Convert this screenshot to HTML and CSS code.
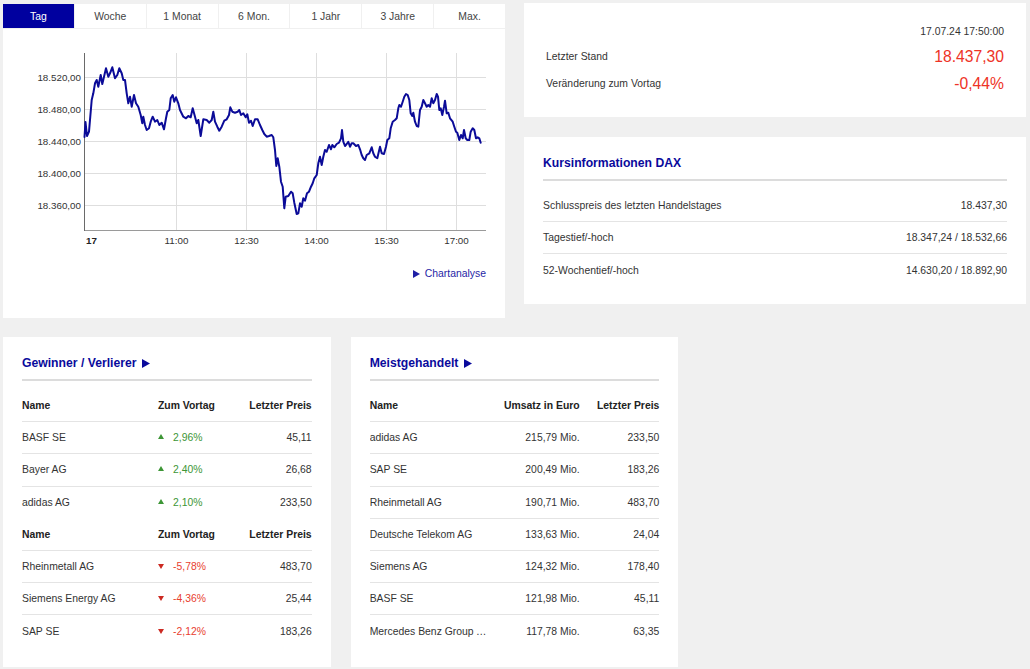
FILE: index.html
```html
<!DOCTYPE html>
<html lang="de">
<head>
<meta charset="utf-8">
<title>DAX</title>
<link rel="stylesheet" href="styles.css">
</head>
<body>
<div class="top">
  <section class="chart-panel">
    <nav class="tabs">
      <span class="tab active">Tag</span>
      <span class="tab">Woche</span>
      <span class="tab">1 Monat</span>
      <span class="tab">6 Mon.</span>
      <span class="tab">1 Jahr</span>
      <span class="tab">3 Jahre</span>
      <span class="tab">Max.</span>
    </nav>
    <svg class="chart" width="502" height="223" viewBox="3 29 502 223">
      <g class="grid">
        <line x1="84" y1="77.5" x2="486" y2="77.5"/>
        <line x1="84" y1="109.5" x2="486" y2="109.5"/>
        <line x1="84" y1="141.5" x2="486" y2="141.5"/>
        <line x1="84" y1="173.5" x2="486" y2="173.5"/>
        <line x1="84" y1="205.5" x2="486" y2="205.5"/>
        <line x1="176.5" y1="53" x2="176.5" y2="230"/>
        <line x1="246.5" y1="53" x2="246.5" y2="230"/>
        <line x1="316.5" y1="53" x2="316.5" y2="230"/>
        <line x1="386.5" y1="53" x2="386.5" y2="230"/>
        <line x1="456.5" y1="53" x2="456.5" y2="230"/>
      </g>
      <line class="axis-x" x1="84" y1="230.5" x2="486" y2="230.5"/>
      <line class="axis-y" x1="84.5" y1="53" x2="84.5" y2="231"/>
      <g class="ylabels">
        <text x="81" y="81.1">18.520,00</text>
        <text x="81" y="113.1">18.480,00</text>
        <text x="81" y="145.1">18.440,00</text>
        <text x="81" y="177.1">18.400,00</text>
        <text x="81" y="209.1">18.360,00</text>
      </g>
      <g class="xlabels">
        <text x="86" y="244.3" class="day">17</text>
        <text x="176.5" y="244.3" text-anchor="middle">11:00</text>
        <text x="246.5" y="244.3" text-anchor="middle">12:30</text>
        <text x="316.5" y="244.3" text-anchor="middle">14:00</text>
        <text x="386.5" y="244.3" text-anchor="middle">15:30</text>
        <text x="456.5" y="244.3" text-anchor="middle">17:00</text>
      </g>
      <polyline class="line" points="84.5,137 85.5,122 87,136 89,131.7 91.7,100 93.3,93.3 95,83.3 96.7,80 98.3,86.7 100.7,75 102.3,84 104,76.7 106,68.3 108.3,76.7 110,73.3 112.3,67.3 115,78.3 117.3,75 119.3,68.3 121.7,73.3 123.3,80 125,80 126.7,93.3 128.3,103.3 130,96.7 131.7,106.7 134,95 136,103.3 138.3,106.7 140.7,115 142.3,123.3 143.3,116.7 145,125 146.7,130 149,128.3 150.7,121.7 152.7,116.7 155,121.7 157.3,120 159.3,125 161.7,122.7 164,129.3 166,118.3 167.3,111.7 169.3,110 170.7,98.3 172.7,95 174.3,101.7 176,97.3 178.3,103.3 180,110 183.3,116.7 186,118.3 188.3,116 190.7,117.3 192.7,108.3 195,116.7 196.7,123.3 198.3,120 200.7,136 203.3,119.3 206.7,120 209.3,122.7 211.7,120 213.3,111.7 215,121.7 217.3,126.7 219.3,130.7 221.7,126.7 224.3,120.7 226.7,119.3 229,115 230.3,107.3 232.3,111.7 235,112.7 237.7,111.7 239.3,110 241,115 243.3,113.3 245.7,117.3 247.3,114.3 249,122.7 251,120.7 252.7,126 255,119.3 257.7,119.3 260,125 262.3,130 264.3,134 266.7,136.7 269,136 271.7,135 273.3,137.3 275,150 276.3,166 277.7,158.3 279.3,166.7 281,181.7 282.7,186.7 284.3,208.3 285.7,196.7 288.3,196 291,191.7 292.7,193.3 294.3,202.7 296.7,214 298.3,213.3 300,203.3 301.7,206.7 303.3,198.3 305,200.7 307,193.3 309,191.7 311,186.7 312.7,183.3 314.3,178.3 316.7,175 318.3,163.3 320,156.7 321.7,165 323.3,156.7 325,150 326.7,151.7 329,145 331,149.3 332.3,145 334.3,147.3 336.7,144 339,142.7 341,138.3 342,130 343.3,141.7 345,146 346.7,144 348.3,141.7 350,146.7 351.7,143.3 353.3,143.3 356,146 358.3,145 360,149.3 361.7,155 363.3,158.3 365,160 366.7,155 369.3,153.3 371.7,147.3 373.3,153.3 375,156.7 377.3,158.3 380,146.7 381.7,153.3 384,154 386,146.7 387.3,140 389.3,138.3 390.7,128.3 392.7,121.7 395,120 396.7,118.3 398.3,108.3 399.3,105 401,106.7 402.7,101.7 404.3,96.7 406,94 407.7,95 409.3,100 410.7,113.3 412.3,116 413.3,112.7 415,121.7 416.7,126 418.3,126.7 420,110 421.7,106.7 423.3,100 425,103.3 426.7,106.7 428.3,105 430,106.7 431.7,98.3 433.3,103.3 435,100 436.7,94 438,96.7 439.3,110 440.7,108.3 442.3,115 444,106.7 445,100.7 446.7,113.3 448.3,112.7 450,118.3 452.7,121.7 454.3,126.7 456,131.7 457.3,132.7 459.3,140 461,135 462.7,138.3 464,130 465.7,138.3 467.3,140 469.3,140 470.7,131.7 472.7,128.3 474.3,130 476,138.3 477.7,137.3 479.3,138.3 480.7,142.7"/>
    </svg>
    <a class="chart-link" href="#"><svg width="7" height="8" viewBox="0 0 7 8"><polygon points="0,0 7,4 0,8"/></svg>Chartanalyse</a>
  </section>

  <div class="side">
    <section class="quote">
      <div class="ts">17.07.24 17:50:00</div>
      <div class="qrow"><span>Letzter Stand</span><span class="big">18.437,30</span></div>
      <div class="qrow second"><span>Veränderung zum Vortag</span><span class="big">-0,44%</span></div>
    </section>
    <section class="card kurs">
      <h2 class="card-title">Kursinformationen DAX</h2>
      <div class="rows">
        <div class="row r2"><span>Schlusspreis des letzten Handelstages</span><span class="num">18.437,30</span></div>
        <div class="row r2"><span>Tagestief/-hoch</span><span class="num">18.347,24 / 18.532,66</span></div>
        <div class="row r2 last"><span>52-Wochentief/-hoch</span><span class="num">14.630,20 / 18.892,90</span></div>
      </div>
    </section>
  </div>
</div>

<div class="bottom">
  <section class="card">
    <h2 class="card-title">Gewinner / Verlierer <svg width="8" height="9" viewBox="0 0 8 9"><polygon points="0,0 8,4.5 0,9"/></svg></h2>
    <div class="rows">
      <div class="row gv head"><span>Name</span><span>Zum Vortag</span><span class="num">Letzter Preis</span></div>
      <div class="row gv"><span>BASF SE</span><span class="chg up"><i class="tri"></i>2,96%</span><span class="num">45,11</span></div>
      <div class="row gv"><span>Bayer AG</span><span class="chg up"><i class="tri"></i>2,40%</span><span class="num">26,68</span></div>
      <div class="row gv last"><span>adidas AG</span><span class="chg up"><i class="tri"></i>2,10%</span><span class="num">233,50</span></div>
      <div class="row gv head"><span>Name</span><span>Zum Vortag</span><span class="num">Letzter Preis</span></div>
      <div class="row gv"><span>Rheinmetall AG</span><span class="chg down"><i class="tri"></i>-5,78%</span><span class="num">483,70</span></div>
      <div class="row gv"><span>Siemens Energy AG</span><span class="chg down"><i class="tri"></i>-4,36%</span><span class="num">25,44</span></div>
      <div class="row gv last"><span>SAP SE</span><span class="chg down"><i class="tri"></i>-2,12%</span><span class="num">183,26</span></div>
    </div>
  </section>

  <section class="card">
    <h2 class="card-title">Meistgehandelt <svg width="8" height="9" viewBox="0 0 8 9"><polygon points="0,0 8,4.5 0,9"/></svg></h2>
    <div class="rows">
      <div class="row mg head"><span>Name</span><span class="num">Umsatz in Euro</span><span class="num">Letzter Preis</span></div>
      <div class="row mg"><span class="name">adidas AG</span><span class="num">215,79 Mio.</span><span class="num">233,50</span></div>
      <div class="row mg"><span class="name">SAP SE</span><span class="num">200,49 Mio.</span><span class="num">183,26</span></div>
      <div class="row mg"><span class="name">Rheinmetall AG</span><span class="num">190,71 Mio.</span><span class="num">483,70</span></div>
      <div class="row mg"><span class="name">Deutsche Telekom AG</span><span class="num">133,63 Mio.</span><span class="num">24,04</span></div>
      <div class="row mg"><span class="name">Siemens AG</span><span class="num">124,32 Mio.</span><span class="num">178,40</span></div>
      <div class="row mg"><span class="name">BASF SE</span><span class="num">121,98 Mio.</span><span class="num">45,11</span></div>
      <div class="row mg last"><span class="name">Mercedes Benz Group AG</span><span class="num">117,78 Mio.</span><span class="num">63,35</span></div>
    </div>
  </section>
</div>
</body>
</html>
```
FILE: styles.css
```css
* { box-sizing: border-box; }

body {
  margin: 0;
  padding: 3px 4px 0 3px;
  background: #f0f0f0;
  font-family: "Liberation Sans", Arial, Helvetica, sans-serif;
  font-size: 10.4px;
  color: #333;
}

.top {
  display: grid;
  grid-template-columns: 1fr 1fr;
  gap: 19px;
  margin-bottom: 19px;
}

/* chart panel */
.chart-panel {
  display: flex;
  flex-direction: column;
  background: #fff;
}

.tabs {
  display: grid;
  grid-template-columns: repeat(7, 1fr);
  gap: 1px;
  padding: 1px 0;
  background: #f0f0f0;
}

.tab {
  height: 24px;
  display: flex;
  align-items: center;
  justify-content: center;
  background: #fff;
  color: #444;
}

.tab.active {
  background: #00009f;
  color: #fff;
}

.chart { display: block; }

.chart .grid line { stroke: #dedede; stroke-width: 1; }
.chart .axis-x { stroke: #9a9a9a; stroke-width: 1; }
.chart .axis-y { stroke: #6a6a6a; stroke-width: 1; }
.chart text {
  font-family: "Liberation Sans", Arial, sans-serif;
  font-size: 9.8px;
  fill: #333;
}
.chart .ylabels text { text-anchor: end; }
.chart .xlabels .day { font-weight: bold; fill: #222; }
.chart .line {
  fill: none;
  stroke: #0b0b98;
  stroke-width: 2;
  stroke-linejoin: round;
  stroke-linecap: round;
}

.chart-link {
  display: flex;
  justify-content: flex-end;
  align-items: center;
  gap: 5px;
  padding: 15px 19px 37px 0;
  line-height: 14px;
  color: #1f1fa6;
  text-decoration: none;
}
.chart-link svg { fill: #1f1fa6; }

/* right column */
.side {
  display: flex;
  flex-direction: column;
  gap: 20px;
  align-self: start;
}

.quote {
  background: #fff;
  padding: 22px 22px 23px;
}

.quote .ts {
  text-align: right;
  line-height: 14px;
}

.qrow {
  display: flex;
  justify-content: space-between;
  align-items: center;
  height: 21px;
  margin-top: 7px;
}
.qrow.second { margin-top: 6px; }

.big {
  font-size: 15.7px;
  color: #ee3326;
}

/* cards */
.card {
  background: #fff;
  padding: 19px 19px 19px;
}
.card.kurs { padding-bottom: 17px; }

.card-title {
  margin: 0;
  font-size: 12.2px;
  font-weight: bold;
  color: #0a0a9c;
  line-height: 15px;
  padding-bottom: 8px;
  border-bottom: 2px solid #dcdcdc;
  display: flex;
  align-items: center;
  gap: 6px;
}
.card-title svg { fill: #0a0a9c; }

.rows { margin-top: 9px; }

.row {
  display: grid;
  align-items: center;
  height: 32.2px;
  border-bottom: 1px solid #e4e4e4;
  white-space: nowrap;
}
.row.last { border-bottom: none; }
.row.head { font-weight: bold; color: #222; }

.row.r2 { grid-template-columns: 1fr auto; }
.row.gv { grid-template-columns: 136px 91px 1fr; }
.row.mg { grid-template-columns: 125px 85px 1fr; }

.num { text-align: right; }

.name {
  overflow: hidden;
  text-overflow: ellipsis;
  padding-right: 5px;
}

.chg {
  display: flex;
  align-items: center;
  gap: 9px;
}
.chg.up { color: #3d9636; }
.chg.down { color: #e8402f; }

.tri {
  display: block;
  width: 0;
  height: 0;
  border-left: 3px solid transparent;
  border-right: 3px solid transparent;
}
.up .tri { border-bottom: 5px solid #3d9636; margin-top: -2px; }
.down .tri { border-top: 5px solid #cc2a22; }

/* bottom row */
.bottom {
  display: grid;
  grid-template-columns: repeat(3, 1fr);
  gap: 20px;
}
```
